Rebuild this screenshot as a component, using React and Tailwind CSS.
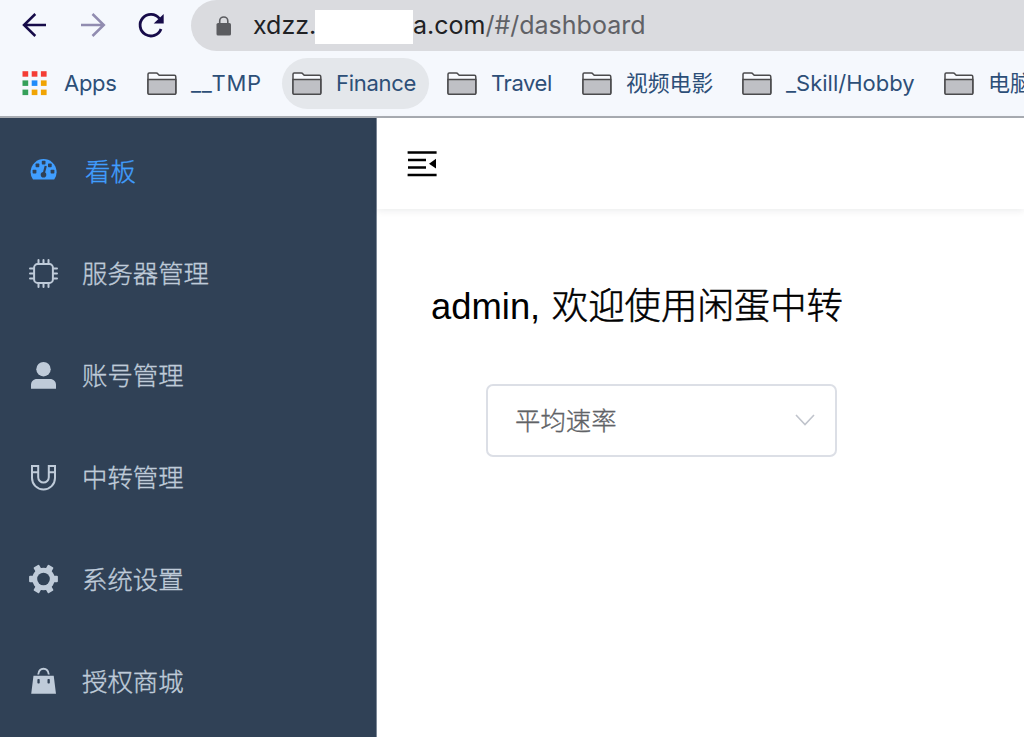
import React from "react";

const ui = "font-['Inter','Noto_Sans_CJK_SC',sans-serif]";
const cjk = "font-['Liberation_Sans','Noto_Sans_CJK_SC',sans-serif]";

function Folder() {
  return (
    <svg className="h-6 w-[30px] shrink-0" viewBox="0 0 30 24" fill="none" stroke="#4b4b4d" strokeWidth="1.5">
      <path d="M1 21V2.200C1 1.400 1.400 1 2.200 1h7c.9 0 1.300.3 1.800 1l1.200 1.300h15.200c.9 0 1.400.5 1.400 1.400v16.300c0 .9-.4 1.300-1.300 1.300h-25C1.500 22.300 1 21.900 1 21z" fill="#f8fafe" />
      <path d="M1 7.500h27.800v13.500c0 .9-.4 1.300-1.300 1.300h-25C1.500 22.300 1 21.900 1 21z" fill="#bfc0c5" />
    </svg>
  );
}

function Apps() {
  const colors = ["#f43d35", "#f43d35", "#f43d35", "#35a05a", "#218cfa", "#f0a404", "#35a05a", "#f0a404", "#f0a404"];
  return (
    <svg className="h-[25px] w-[25px] shrink-0" viewBox="0 0 25 25">
      {colors.map((c, i) => (
        <rect key={i} x={0.5 + (i % 3) * 9.2} y={0.2 + Math.floor(i / 3) * 9.2} width="5.700" height="5.500" fill={c} />
      ))}
    </svg>
  );
}

function Bookmark({ label, className, textClass }) {
  return (
    <div className={"flex h-[51px] shrink-0 items-center rounded-full pl-2.5 " + className}>
      <Folder />
      <span className={"ml-3.5 whitespace-nowrap " + (textClass || "")}>{label}</span>
    </div>
  );
}

const icons = {
  gauge: (
    <g>
      <path d="M5 23.600A13 13 0 1 1 26.200 23.600z" fill="#409eff" />
      <g fill="#304156">
        <rect x="13.800" y="4.700" width="3.700" height="3.700" rx=".7" />
        <rect x="7.600" y="7.500" width="3.700" height="3.700" rx=".7" />
        <rect x="20" y="7.500" width="3.700" height="3.700" rx=".7" />
        <rect x="4.600" y="13.800" width="3.800" height="3.700" rx=".7" />
        <rect x="22.600" y="13.800" width="3.800" height="3.700" rx=".7" />
        <circle cx="15.500" cy="18.700" r="2.800" />
        <path d="M14.600 18l2-8.300 2.200.5-2.200 8.300z" />
      </g>
    </g>
  ),
  chip: (
    <g fill="none" stroke="#bfcbd9" strokeWidth="2" strokeLinecap="round">
      <rect x="6.100" y="6.100" width="18.800" height="18.800" rx="3.500" />
      <path d="M10.500 5V2M15.500 5V2M20.500 5V2M10.500 26v3M15.500 26v3M20.500 26v3M5 10.500H2M5 15.500H2M5 20.500H2M26 10.500h3M26 15.500h3M26 20.500h3" />
    </g>
  ),
  user: (
    <g fill="#bfcbd9">
      <circle cx="15.500" cy="9.200" r="7.200" />
      <path d="M3 28.800V25c0-3.500 2.500-6 6-6h13c3.500 0 6 2.500 6 6v3.800z" />
    </g>
  ),
  magnet: (
    <path d="M4 4h6.200v11.300a5.300 5.300 0 0 0 10.600 0V4H27v12a11.500 11.500 0 0 1-23 0zM4 10.300h6.200M20.800 10.300H27" fill="none" stroke="#bfcbd9" strokeWidth="2" />
  ),
  gear: (
    <g>
      <g fill="#bfcbd9">
        <circle cx="15.500" cy="15" r="11.200" />
        <rect x="1.100" y="11.800" width="28.800" height="6.400" rx="1" />
        <rect x="0.600" y="11.800" width="29.800" height="6.400" rx="1" transform="rotate(60 15.500 15)" />
        <rect x="0.600" y="11.800" width="29.800" height="6.400" rx="1" transform="rotate(120 15.500 15)" />
      </g>
      <circle cx="15.500" cy="15" r="6.300" fill="#304156" />
    </g>
  ),
  bag: (
    <g>
      <path d="M5.500 9.800h20.200L28 27.800H3.200z" fill="#bfcbd9" />
      <path d="M10.200 8.500C10.600 5 12.500 2.700 15.500 2.700s4.900 2.300 5.300 5.800" fill="none" stroke="#bfcbd9" strokeWidth="1.900" />
      <rect x="9.400" y="13" width="2.300" height="4.500" rx=".8" fill="#304156" />
      <rect x="19.500" y="13" width="2.300" height="4.500" rx=".8" fill="#304156" />
    </g>
  ),
};

const menu = [
  ["gauge", "看板"],
  ["chip", "服务器管理"],
  ["user", "账号管理"],
  ["magnet", "中转管理"],
  ["gear", "系统设置"],
  ["bag", "授权商城"],
];

export default function App() {
  return (
    <div className="flex h-[737px] w-[1024px] flex-col overflow-hidden bg-white">
      <header className={"h-[118px] shrink-0 border-b-2 border-[#a9adb3] bg-[#f5f8fd] " + ui}>
        <div className="flex h-[51px] items-center">
          <svg className="h-[51px] w-[191px] shrink-0" viewBox="0 0 191 51" fill="none" strokeWidth="2.500">
            <path d="M46 25H24M35.300 14L24 25l11.300 11" stroke="#160b49" />
            <path d="M81 25h22M92.500 14l11.300 11-11.300 11" stroke="#918cb0" />
            <path d="M161 29a10.800 10.800 0 1 1-1.600-10.500" stroke="#160b49" strokeWidth="2.800" />
            <path d="M163.700 14v9.500h-10z" fill="#160b49" />
          </svg>
          <div className="flex h-[51px] grow items-center rounded-l-full bg-[#dadbdf] text-[25px] text-[#202124]">
            <svg className="ml-[25px] h-5 w-4 shrink-0" viewBox="0 0 16 20">
              <rect x=".5" y="7" width="14.500" height="12.500" rx="1.600" fill="#5b5c60" />
              <path d="M3.700 8V5a4.050 4.050 0 0 1 8.100 0v3" fill="none" stroke="#5b5c60" strokeWidth="1.600" />
            </svg>
            <span className="mt-px ml-[21px] w-[62px] whitespace-nowrap">xdzz.</span>
            <span className="mt-0.5 h-[34px] w-[98px] bg-white" />
            <span className="mt-px whitespace-nowrap">a.com<span className="text-[#606166]">/#/dashboard</span></span>
          </div>
        </div>
        <div className="flex h-[65px] items-center gap-2 pl-[22px] text-[22px] text-[#2d4f78]">
          <div className="flex w-[107px] shrink-0 items-center">
            <Apps />
            <span className="ml-[17px] tracking-[-0.3px]">Apps</span>
          </div>
          <Bookmark label="__TMP" className="w-[137px]" textClass="tracking-[0.8px]" />
          <Bookmark label="Finance" className="w-[147px] bg-[#e4e7eb]" textClass="tracking-[-0.3px]" />
          <Bookmark label="Travel" className="w-[127px]" textClass="tracking-[-0.4px]" />
          <Bookmark label="视频电影" className="w-[152px]" textClass="text-[21.800px]" />
          <Bookmark label="_Skill/Hobby" className="w-[194px]" />
          <Bookmark label="电脑" className="w-[110px]" />
        </div>
      </header>
      <div className={"flex min-h-0 grow " + cjk}>
        <nav className="w-[377px] shrink-0 border-r border-[#7d8998] bg-[#304156] pt-[3px]">
          {menu.map(([icon, label], i) => (
            <div key={icon} className={"flex h-[102px] items-center pl-7 text-[25.400px] font-light [-webkit-text-stroke:0.35px] " + (i === 0 ? "text-[#409eff]" : "text-[#bfcbd9]")}>
              <svg className="h-8 w-8 shrink-0" viewBox="0 0 32 32">{icons[icon]}</svg>
              <span className={"whitespace-nowrap pt-px " + (i === 0 ? "ml-[25px]" : "ml-[22px]")}>{label}</span>
            </div>
          ))}
        </nav>
        <main className="grow bg-white">
          <div className="h-[91px] pt-8 pl-[30px] shadow-[0_2px_7px_rgba(0,21,41,0.08)]">
            <svg className="h-[28px] w-[30px]" viewBox="0 0 30 28">
              <path d="M.6 2.500h29M1 10h18M1 17.600h18M.6 25h29" stroke="#000" strokeWidth="2.500" />
              <path d="M29 8.800v9.700l-7-4.850z" fill="#000" />
            </svg>
          </div>
          <h1 className="mt-[70px] ml-[54px] h-[56px] whitespace-nowrap text-[36.400px] leading-[56px] font-light text-black">
            admin, <span className="ml-[1.500px] [-webkit-text-stroke:0.5px]">欢迎使用闲蛋中转</span>
          </h1>
          <div className="mt-[49px] ml-[109px] flex h-[73px] w-[351px] items-center justify-between rounded-[7px] border-2 border-[#dcdfe6] pr-5 pl-[27px] text-[25.400px] font-light text-[#606266]">
            <span className="pt-px [-webkit-text-stroke:0.35px]">平均速率</span>
            <svg className="-mt-0.5 h-3 w-5" viewBox="0 0 20 12" fill="none" stroke="#c0c4cc" strokeWidth="1.600">
              <path d="M1 1l9 9.500L19 1" />
            </svg>
          </div>
        </main>
      </div>
    </div>
  );
}
